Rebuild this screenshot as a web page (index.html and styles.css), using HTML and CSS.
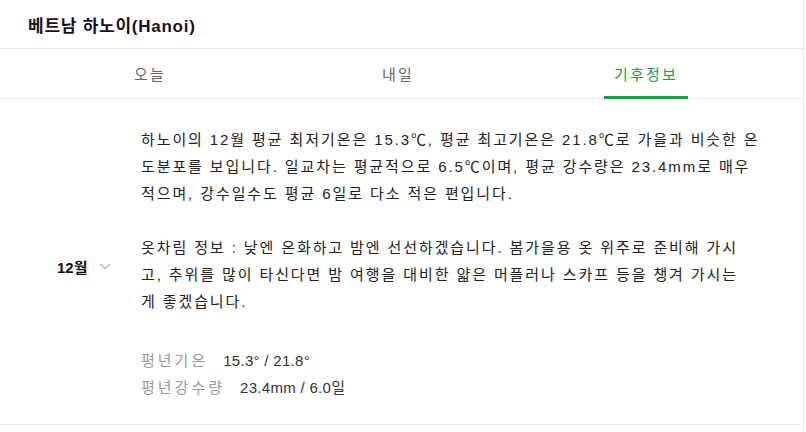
FILE: index.html
```html
<!DOCTYPE html>
<html lang="ko">
<head>
<meta charset="utf-8">
<link rel="stylesheet" href="styles.css">
</head>
<body>
<div class="panel">
  <header class="title-bar">
    <h1 class="title">베트남 하노이(Hanoi)</h1>
  </header>
  <nav class="tabs">
    <a class="tab">오늘</a>
    <a class="tab">내일</a>
    <a class="tab active">기후정보</a>
  </nav>
  <section class="climate">
    <div class="month">
      <span class="month-label">12월</span>
      <svg class="chev" width="12" height="7" viewBox="0 0 12 7"><path d="M1 1 L6 5.5 L11 1" fill="none" stroke="#b4b4b4" stroke-width="1.4"/></svg>
    </div>
    <div class="info">
      <p class="desc">하노이의 12월 평균 최저기온은 15.3℃, 평균 최고기온은 21.8℃로 가을과 비슷한 온<br>도분포를 보입니다. 일교차는 평균적으로 6.5℃이며, 평균 강수량은 23.4mm로 매우<br>적으며, 강수일수도 평균 6일로 다소 적은 편입니다.</p>
      <p class="desc">옷차림 정보 : 낮엔 온화하고 밤엔 선선하겠습니다. 봄가을용 옷 위주로 준비해 가시<br>고, 추위를 많이 타신다면 밤 여행을 대비한 얇은 머플러나 스카프 등을 챙겨 가시는<br>게 좋겠습니다.</p>
      <dl class="stats">
        <div class="stat"><dt>평년기온</dt><dd>15.3° / 21.8°</dd></div>
        <div class="stat"><dt>평년강수량</dt><dd>23.4mm / 6.0일</dd></div>
      </dl>
    </div>
  </section>
</div>
</body>
</html>
```
FILE: styles.css
```css
* { box-sizing: border-box; }
html, body { margin: 0; padding: 0; background: #fff; }
body {
  font-family: "Liberation Sans", "Noto Sans CJK KR", sans-serif;
  color: #222;
}
.panel {
  width: 804px;
  height: 432px;
  border-right: 1px solid #e8e8e8;
}
.title-bar {
  height: 49px;
  border-bottom: 1px solid #ebebeb;
  padding-left: 28px;
  display: flex;
  align-items: center;
}
.title {
  margin: 0;
  font-size: 17px;
  font-weight: bold;
  color: #1a1020;
  letter-spacing: 0.75px;
}
.tabs {
  display: flex;
  height: 50px;
  padding: 0 33px 0 26px;
  border-bottom: 1px solid #ebebeb;
}
.tab {
  flex: 1;
  display: flex;
  align-items: center;
  justify-content: center;
  font-size: 15px;
  color: #666;
  letter-spacing: 2.2px;
  position: relative;
}
.tab.active { color: #1b9b45; }
.tab.active::after {
  content: "";
  position: absolute;
  left: 82px;
  right: 82px;
  bottom: -1px;
  height: 3px;
  background: #17a03d;
}
.climate {
  display: flex;
  align-items: flex-start;
  height: 326px;
  padding-top: 27px;
  border-bottom: 1px solid #ebebeb;
  margin-right: 2px;
}
.month {
  align-self: center;
  width: 141px;
  padding-left: 57px;
  display: flex;
  align-items: center;
  gap: 11px;
  margin-top: -17px;
}
.month-label {
  font-size: 15px;
  font-weight: bold;
  color: #111;
}
.info { flex: 1; }
.desc {
  margin: 0 0 27px;
  font-size: 15px;
  line-height: 27px;
  color: #222;
  white-space: nowrap;
  letter-spacing: 1.9px;
}
.stats { margin: 32px 0 0; }
.stat {
  display: flex;
  font-size: 15px;
  line-height: 27px;
}
.stat dt { color: #999; letter-spacing: 3px; margin-right: 15px; }
.stat dd { margin: 0; color: #333; letter-spacing: 0.3px; }
```
